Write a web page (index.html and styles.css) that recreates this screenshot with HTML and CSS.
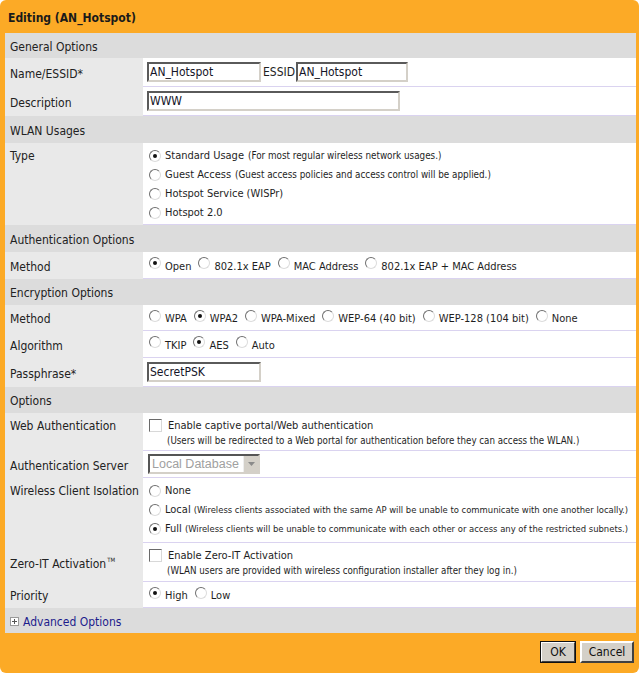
FILE: index.html
```html
<!DOCTYPE html>
<html>
<head>
<meta charset="utf-8">
<link rel="stylesheet" href="styles.css">
</head>
<body>
<div class="dialog">
  <div class="title">Editing (AN_Hotspot)</div>
  <div class="panel">
    <div class="sec h25">General Options</div>
    <div class="row h29"><div class="lbl">Name/ESSID*</div><div class="val"><span class="input w113">AN_Hotspot</span><span class="essid">ESSID</span><span class="input w112">AN_Hotspot</span></div></div>
    <div class="row h29"><div class="lbl">Description</div><div class="val"><span class="input w253">WWW</span></div></div>
    <div class="sec h27">WLAN Usages</div>
    <div class="row h82"><div class="lbl top">Type</div><div class="val top">
      <div class="line"><span class="radio on"></span>Standard Usage <span class="note">(For most regular wireless network usages.)</span></div>
      <div class="line"><span class="radio"></span>Guest Access <span class="note">(Guest access policies and access control will be applied.)</span></div>
      <div class="line"><span class="radio"></span>Hotspot Service (WISPr)</div>
      <div class="line"><span class="radio"></span>Hotspot 2.0</div>
    </div></div>
    <div class="sec h27">Authentication Options</div>
    <div class="row h27"><div class="lbl">Method</div><div class="val">
      <span class="opt"><span class="radio on up"></span>Open</span><span class="opt"><span class="radio up"></span>802.1x EAP</span><span class="opt"><span class="radio up"></span>MAC Address</span><span class="opt"><span class="radio up"></span>802.1x EAP + MAC Address</span>
    </div></div>
    <div class="sec h26">Encryption Options</div>
    <div class="row h26"><div class="lbl">Method</div><div class="val">
      <span class="opt"><span class="radio up"></span>WPA</span><span class="opt"><span class="radio on up"></span>WPA2</span><span class="opt"><span class="radio up"></span>WPA-Mixed</span><span class="opt"><span class="radio up"></span>WEP-64 (40 bit)</span><span class="opt"><span class="radio up"></span>WEP-128 (104 bit)</span><span class="opt"><span class="radio up"></span>None</span>
    </div></div>
    <div class="row h27"><div class="lbl">Algorithm</div><div class="val">
      <span class="opt"><span class="radio up"></span>TKIP</span><span class="opt"><span class="radio on up"></span>AES</span><span class="opt"><span class="radio up"></span>Auto</span>
    </div></div>
    <div class="row h29"><div class="lbl">Passphrase*</div><div class="val"><span class="input w113">SecretPSK</span></div></div>
    <div class="sec h26">Options</div>
    <div class="row h38"><div class="lbl top">Web Authentication</div><div class="val top">
      <div class="line"><span class="check"></span>Enable captive portal/Web authentication</div>
      <div class="subnote">(Users will be redirected to a Web portal for authentication before they can access the WLAN.)</div>
    </div></div>
    <div class="row h27"><div class="lbl">Authentication Server</div><div class="val"><span class="select"><span class="seltext">Local Database</span><span class="selbtn"><svg width="7" height="4" viewBox="0 0 7 4"><path d="M0 0h7L3.5 4z" fill="#8a8a8a"/></svg></span></span></div></div>
    <div class="row h65"><div class="lbl top">Wireless Client Isolation</div><div class="val top">
      <div class="line"><span class="radio"></span>None</div>
      <div class="line"><span class="radio"></span>Local <span class="note small">(Wireless clients associated with the same AP will be unable to communicate with one another locally.)</span></div>
      <div class="line"><span class="radio on"></span>Full <span class="note small">(Wireless clients will be unable to communicate with each other or access any of the restricted subnets.)</span></div>
    </div></div>
    <div class="row h39"><div class="lbl"><span>Zero-IT Activation<sup class="tm">TM</sup></span></div><div class="val top">
      <div class="line"><span class="check"></span>Enable Zero-IT Activation</div>
      <div class="subnote">(WLAN users are provided with wireless configuration installer after they log in.)</div>
    </div></div>
    <div class="row h26"><div class="lbl">Priority</div><div class="val">
      <span class="opt"><span class="radio on up"></span>High</span><span class="opt"><span class="radio up"></span>Low</span>
    </div></div>
    <div class="sec h25 adv"><span class="plus"><svg width="9" height="9" viewBox="0 0 9 9"><rect x="0.5" y="0.5" width="8" height="8" fill="#fff" stroke="#9a9a9a"/><path d="M2 4.5h5M4.5 2v5" stroke="#555"/></svg></span><span class="link">Advanced Options</span></div>
  </div>
  <div class="footer">
    <span class="btn ok">OK</span><span class="btn cancel">Cancel</span>
  </div>
</div>
</body>
</html>
```
FILE: styles.css
```css
html, body {
  margin: 0;
  padding: 0;
  background: #fff;
}
*, *::before, *::after {
  box-sizing: border-box;
}
body {
  font-family: "DejaVu Sans Condensed", "DejaVu Sans", sans-serif;
  font-stretch: condensed;
  font-size: 11px;
  color: #1e1e1e;
}
.dialog {
  width: 639px;
  height: 673px;
  background: #fcaa26;
  border-radius: 6px;
  display: flex;
  flex-direction: column;
}
.title {
  height: 33px;
  line-height: 37px;
  padding-left: 8px;
  font-weight: bold;
  font-size: 12px;
  color: #1a1a1a;
  flex: none;
}
.panel {
  margin: 0 3px 0 5px;
  background: #fff;
  flex: none;
}
.h25 { height: 25px; }
.h26 { height: 26px; }
.h27 { height: 27px; }
.h29 { height: 29px; }
.h38 { height: 38px; }
.h39 { height: 39px; }
.h65 { height: 65px; }
.h82 { height: 82px; }
.sec {
  display: flex;
  align-items: center;
  background: #dcdcdc;
  padding: 2px 0 0 5px;
  font-size: 12px;
  color: #222;
}
.row {
  display: grid;
  grid-template-columns: 138px 1fr;
}
.lbl {
  display: flex;
  align-items: center;
  background: #e9e9e9;
  padding: 2px 0 0 5px;
  font-size: 12px;
  color: #222;
  white-space: nowrap;
}
.lbl.top {
  align-items: flex-start;
  padding-top: 6px;
}
.val {
  display: flex;
  align-items: center;
  background: #fff;
  padding-left: 4px;
  border-bottom: 1px solid #dad3f0;
  white-space: nowrap;
  overflow: hidden;
  min-width: 0;
}
.val.top {
  flex-direction: column;
  align-items: stretch;
  justify-content: flex-start;
  padding-top: 3px;
}
.line {
  height: 19px;
  display: flex;
  align-items: center;
}
.note {
  font-size: 9.8px;
  margin-left: 4px;
}
.note.small {
  font-size: 9.4px;
  margin-left: 3px;
}
.subnote {
  font-size: 9.7px;
  line-height: 12px;
  padding-left: 20px;
}
.radio {
  display: inline-block;
  width: 12px;
  height: 12px;
  border-radius: 50%;
  border: 1px solid;
  border-color: #6f6f6f #dcdcdc #dcdcdc #6f6f6f;
  background: #fff;
  margin: 0 4px 0 2px;
  position: relative;
  flex: none;
}
.radio.on::after {
  content: "";
  position: absolute;
  left: 3px;
  top: 3px;
  width: 4px;
  height: 4px;
  border-radius: 50%;
  background: #111;
}
.radio.up {
  margin-bottom: 6px;
}
.opt {
  display: flex;
  align-items: center;
  margin-right: 5px;
  padding-top: 2px;
}
.check {
  display: inline-block;
  width: 13px;
  height: 13px;
  border: 1px solid;
  border-color: #6a6a6a #d8d8d8 #d8d8d8 #6a6a6a;
  background: #fff;
  margin: 0 6px 0 2px;
  flex: none;
}
.input {
  display: inline-block;
  height: 20px;
  line-height: 16px;
  border: 2px solid;
  border-color: #5a5a5a #d4d0c8 #d4d0c8 #5a5a5a;
  padding-left: 1px;
  font-size: 12px;
  color: #141428;
  background: #fff;
}
.w113 { width: 114px; }
.w112 { width: 112px; }
.w253 { width: 253px; }
.essid {
  font-size: 12px;
  margin: 0 1px 0 2px;
}
.select {
  display: inline-flex;
  width: 112px;
  height: 20px;
  border: 2px solid;
  border-color: #555 #d4d0c8 #d4d0c8 #555;
  margin-left: 1px;
  background: #fff;
}
.seltext {
  flex: 1;
  font-family: "Liberation Sans", Arial, sans-serif;
  font-stretch: normal;
  font-size: 12.5px;
  line-height: 16px;
  color: #a0a0a0;
  padding-left: 2px;
}
.selbtn {
  width: 15px;
  background: #d4d0c8;
  border-left: 1px solid #eee;
  display: flex;
  align-items: center;
  justify-content: center;
}
.tm {
  font-size: 6px;
  line-height: 0;
  vertical-align: 6px;
  margin-left: 1px;
}
.plus {
  display: inline-flex;
  margin-right: 4px;
}
.plus svg { display: block; }
.link {
  color: #1c1c8c;
  font-size: 12px;
}
.footer {
  flex: 1;
  display: flex;
  justify-content: flex-end;
  align-items: flex-start;
  padding: 8px 5px 0 0;
  gap: 4px;
}
.btn {
  height: 22px;
  line-height: 18px;
  padding: 0;
  background: #d4d0c8;
  border: 2px solid;
  border-color: #fff #404040 #404040 #fff;
  font-size: 12px;
  color: #111;
  text-align: center;
}
.btn.ok {
  width: 36px;
  outline: 1px solid #111;
  outline-offset: -1px;
}
.btn.cancel {
  width: 54px;
}
```
